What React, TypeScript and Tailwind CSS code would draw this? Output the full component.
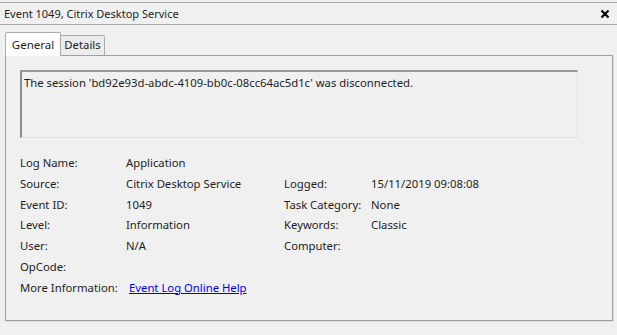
const rows: [string, string, string?, string?][] = [
  ["Source:", "Citrix Desktop Service", "Logged:", "15/11/2019 09:08:08"],
  ["Event ID:", "1049", "Task Category:", "None"],
  ["Level:", "Information", "Keywords:", "Classic"],
  ["User:", "N/A", "Computer:", ""],
];

export default function App() {
  return (
    <div
      className="h-[335px] w-[617px] overflow-hidden bg-[#f0f0f0] text-[11.3px] text-[#1e1e1e]"
      style={{ fontFamily: '"Noto Sans", "Open Sans", sans-serif' }}
    >
      {/* title bar */}
      <div className="mt-[2px] flex h-[23px] items-center justify-between border-y border-[#a9a9a9] bg-[#f0f0f0] pl-[4px] pr-[7px]">
        <span className="text-[11px] leading-none">Event 1049, Citrix Desktop Service</span>
        <svg width="10" height="10" viewBox="0 0 10 10" className="text-black">
          <path d="M1.5 1.5 L8.5 8.5 M8.5 1.5 L1.5 8.5" stroke="currentColor" strokeWidth="2.2" />
        </svg>
      </div>

      {/* tabs */}
      <div className="mt-[7px] flex items-end pl-[5px]">
        <div className="relative z-10 -mb-px flex h-[24px] w-[56px] items-center justify-center rounded-t-[2px] border border-b-0 border-[#acacac] bg-white text-[11.5px]">
          General
        </div>
        <div className="flex h-[20px] w-[44px] items-center justify-center rounded-tr-[2px] border border-l-0 border-b-0 border-[#acacac] bg-[#ececec]">
          Details
        </div>
      </div>

      {/* panel */}
      <div className="ml-[5px] h-[266px] w-[608px] border border-[#a0a0a0] bg-[#f0f0f0] pl-[14px] pt-[14px] shadow-[1px_1px_0_#dcdcdc]">
        <div className="h-[68px] w-[558px] border-l-2 border-t-2 border-r border-b border-l-[#8e8e8e] border-t-[#9a9a9a] border-r-[#e2e2e2] border-b-[#e2e2e2] bg-[#f0f0f0] px-[2px] pt-[3px] leading-[16px]">
          The session 'bd92e93d-abdc-4109-bb0c-08cc64ac5d1c' was disconnected.
        </div>

        <div className="mt-[15px] grid grid-cols-[106px_158px_87px_1fr] auto-rows-[20.8px] items-center">
          <span>Log Name:</span>
          <span className="col-span-3">Application</span>
          {rows.map(([a, b, c, d]) => (
            <div key={a} className="contents">
              <span>{a}</span>
              <span>{b}</span>
              <span>{c}</span>
              <span>{d}</span>
            </div>
          ))}
          <span className="col-span-4">OpCode:</span>
          <span>More Information:</span>
          <span className="col-span-3 pl-[3px]">
            <a href="#" className="text-[#0000ee] underline">
              Event Log Online Help
            </a>
          </span>
        </div>
      </div>
    </div>
  );
}
